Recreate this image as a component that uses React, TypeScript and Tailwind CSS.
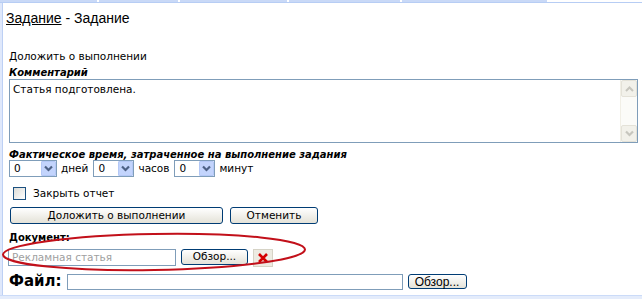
import React from "react";

function Chevron({ color = "#4d6185" }: { color?: string }) {
  return (
    <svg width="9" height="7" viewBox="0 0 9 7">
      <path d="M1 1.5 L4.5 5 L8 1.5" fill="none" stroke={color} strokeWidth="2.2" />
    </svg>
  );
}

function Select({ w }: { w: number }) {
  return (
    <div
      className="flex items-center h-[17px] border border-[#7f9db9] bg-white"
      style={{ width: w }}
    >
      <span className="flex-1 pl-[4px] text-[10.5px] leading-[15px]">0</span>
      <div className="w-[15px] h-[15px] bg-[#c3d4fc] rounded-[1px] flex items-center justify-center border border-[#b4c8f6]">
        <Chevron />
      </div>
    </div>
  );
}

function XpButton({ w, children, h = 17 }: { w: number; h?: number; children: React.ReactNode }) {
  return (
    <div
      className="flex items-center justify-center border border-[#003c74] rounded-[3px] bg-linear-to-b from-white to-[#e4e2d8] text-[10.5px]"
      style={{ width: w, height: h }}
    >
      {children}
    </div>
  );
}

export default function App() {
  const segs = [97, 79, 107, 111, 145];
  return (
    <div className="relative w-[642px] h-[299px] bg-white overflow-hidden font-['DejaVu_Sans',sans-serif] text-black text-[10.5px] flex flex-col">
      {/* top strip */}
      <div className="h-[3px] flex flex-col">
        <div className="h-[2px] flex gap-[2px]">
          {segs.map((s, i) => (
            <div key={i} className="h-[2px] bg-[#c9d9f7]" style={{ width: s }} />
          ))}
        </div>
        <div className="h-[1px] bg-[#b7cdf4]" />
      </div>
      <div className="flex flex-1">
        {/* left border */}
        <div className="w-[3px] flex">
          <div className="w-[2px] bg-[#dfe8fb]" />
          <div className="w-[1px] bg-[#bdd0f4]" />
        </div>
        <div className="flex-1 flex flex-col">
          <div className="ml-[3px] mt-[6px] text-[14px] leading-[18px] font-['Liberation_Sans',sans-serif]">
            <span className="underline">Задание</span> - Задание
          </div>
          <div className="ml-[6px] mt-[23px] leading-[13px]">Доложить о выполнении</div>
          <div className="ml-[6px] mt-[3px] leading-[13px] text-[10px] font-bold italic">Комментарий</div>
          <div className="ml-[6px] w-[629px] h-[64px] border border-[#7f9db9] flex">
            <div className="flex-1 pl-[3px] pt-[3px] leading-[13px]">Статья подготовлена.</div>
            <div className="w-[17px] bg-[#fbfbf8] flex flex-col justify-between border-l border-[#f1efe6]">
              <div className="h-[17px] bg-[#f2f1ea] border border-[#e4e2d8] rounded-[2px] flex items-center justify-center">
                <svg width="9" height="6" viewBox="0 0 9 6">
                  <path d="M1 5 L4.5 1.5 L8 5" fill="none" stroke="#c7c6be" strokeWidth="2" />
                </svg>
              </div>
              <div className="h-[17px] bg-[#f2f1ea] border border-[#e4e2d8] rounded-[2px] flex items-center justify-center">
                <Chevron color="#c7c6be" />
              </div>
            </div>
          </div>
          <div className="ml-[6px] mt-[6px] leading-[11px] text-[10px] font-bold italic">
            Фактическое время, затраченное на выполнение задания
          </div>
          <div className="ml-[6px] flex items-center h-[17px]">
            <Select w={48} />
            <span className="ml-[4px] mr-[5px]">дней</span>
            <Select w={41} />
            <span className="ml-[4px] mr-[5px]">часов</span>
            <Select w={41} />
            <span className="ml-[4px]">минут</span>
          </div>
          <div className="ml-[10px] mt-[10px] flex items-center h-[13px]">
            <div className="w-[13px] h-[13px] border border-[#1c5180] bg-linear-to-br from-[#dcdcd7] to-white" />
            <span className="ml-[7px] leading-[13px]">Закрыть отчет</span>
          </div>
          <div className="ml-[7px] mt-[7px] flex gap-[7px]">
            <XpButton w={213}>Доложить о выполнении</XpButton>
            <XpButton w={88}>Отменить</XpButton>
          </div>
          <div className="ml-[6px] mt-[8px] leading-[12px] text-[10px] font-bold">Документ:</div>
          <div className="ml-[5px] mt-[5px] flex items-start">
            <div className="w-[168px] h-[17px] border border-[#7f9db9] pl-[3px] text-[#a0a0a0] leading-[15px]">
              Рекламная статья
            </div>
            <div className="ml-[5px]">
              <XpButton w={67} h={16}>Обзор...</XpButton>
            </div>
            <div className="ml-[5px] w-[20px] h-[18px] bg-[#edebe2] border border-[#d6d3c6] flex items-center justify-center">
              <svg width="12" height="12" viewBox="0 0 12 12">
                <path d="M2 2 L10 10 M10 2 L2 10" stroke="#d40000" strokeWidth="2.6" />
              </svg>
            </div>
          </div>
          <div className="ml-[6px] mt-[6px] flex items-center h-[17px]">
            <span className="text-[15px] font-bold leading-[17px]">Файл:</span>
            <div className="ml-[5px] w-[336px] h-[16px] border border-[#7f9db9]" />
            <div className="ml-[5px] w-[59px] h-[15px] flex items-center justify-center border border-[#003c74] rounded-[3px] bg-linear-to-b from-white to-[#e4e2d8] font-['Liberation_Sans',sans-serif] text-[12px]">
              Обзор...
            </div>
          </div>
        </div>
      </div>
      {/* bottom band */}
      <div className="h-[4px] bg-[#e4ecfb] border-t border-[#cbdbf8]" />
      {/* red annotation ellipse */}
      <svg className="absolute left-0 top-[228px] pointer-events-none" width="312" height="48" viewBox="0 0 312 48">
        <ellipse cx="154" cy="24" rx="151" ry="18" fill="none" stroke="#c2101a" strokeWidth="2" transform="rotate(-1 154 24)" />
      </svg>
    </div>
  );
}
